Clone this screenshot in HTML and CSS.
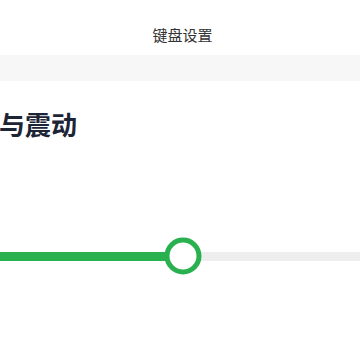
FILE: index.html
```html
<!doctype html>
<html>

<head>
	<meta charset="utf-8">
	<title>键盘设置</title>
	<link rel="stylesheet" href="styles.css">
</head>

<body>
	<div class="header">
		<div class="title">键盘设置</div>
	</div>
	<div class="band"></div>

	<div class="content">
		<div class="section-title">声音与震动</div>
		<div class="slider">
			<div class="track">
				<div class="fill" style="width: 50%;"></div>
				<div class="thumb" style="left: 50%;"></div>
			</div>
		</div>
	</div>
</body>

</html>
```

FILE: styles.css
```css
html,
body {
	margin: 0;
	padding: 0;
	background-color: #ffffff;
}

body {
	width: 360px;
	height: 360px;
	overflow: hidden;
	font-family: 'Noto Sans CJK SC', 'Noto Sans', sans-serif;
}

.header {
	height: 55px;
	padding-left: 5px;
	box-sizing: border-box;
}

.title {
	padding-top: 14px;
	line-height: 42px;
	font-size: 15px;
	color: #333333;
	text-align: center;
}

.band {
	height: 26px;
	background-color: #f7f7f7;
}

.content {
	margin-left: -53px;
	width: 471px;
}

.section-title {
	margin-top: 25px;
	line-height: 36px;
	font-size: 26px;
	font-weight: 700;
	color: #1d2435;
}

.slider {
	margin-top: 94px;
	height: 40px;
	display: flex;
	align-items: center;
}

.track {
	position: relative;
	width: 100%;
	height: 9px;
	background-color: #eeeeee;
}

.fill {
	height: 100%;
	background-color: #29b14f;
}

.thumb {
	position: absolute;
	top: 50%;
	width: 27px;
	height: 27px;
	border: 5.5px solid #29b14f;
	border-radius: 50%;
	background-color: #ffffff;
	transform: translate(-50%, -50%);
}
```
